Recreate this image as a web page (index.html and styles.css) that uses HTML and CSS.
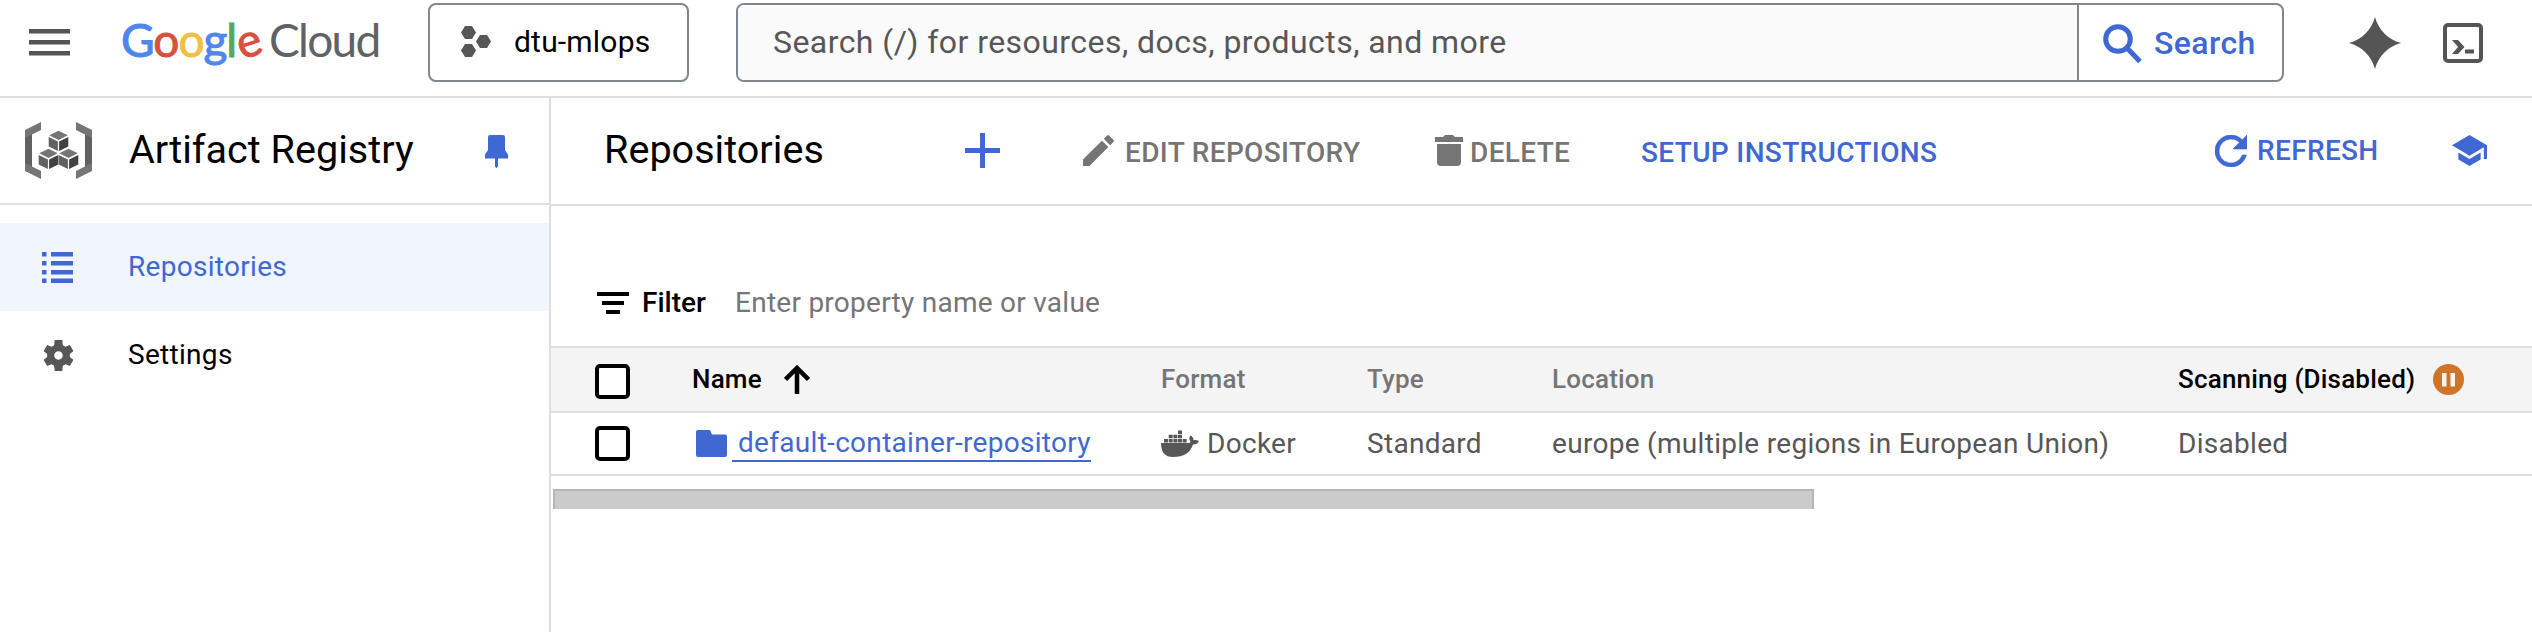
FILE: index.html
```html
<!DOCTYPE html>
<html lang="en">
<head>
<meta charset="utf-8">
<title>Artifact Registry</title>
<link rel="stylesheet" href="styles.css">
</head>
<body>
<header class="topbar">
  <svg class="menu" width="41" height="27" viewBox="0 0 41 27" fill="#555"><path d="M0 0h41v4.500H0zM0 11h41v4.500H0zM0 22h41v4.500H0z"/></svg>
  <div class="logo"><span class="google"><span class="b">G</span><span class="r">o</span><span class="y">o</span><span class="b">g</span><span class="g">l</span><span class="r tilt">e</span></span><span class="cloud">Cloud</span></div>
  <button class="project">
    <svg width="30" height="32" viewBox="0 0 30 32" fill="#575757"><path d="M4 0h7l4 6.500-4 6.500H4L0 6.500zM4 18h7l4 6.500-4 6.500H4L0 24.500zM19 9h7l4 6.500-4 6.500h-7l-4-6.500z"/></svg>
    <span class="project-name">dtu-mlops</span>
  </button>
  <div class="search">
    <div class="search-field"><span class="t-ph">Search (/) for resources, docs, products, and more</span></div>
    <div class="search-btn">
      <svg width="40" height="40" viewBox="0 0 40 40" fill="none" stroke="#3f68d3" stroke-width="5"><circle cx="15" cy="15" r="12.300"/><path d="M23.500 23.500 37 37.500"/></svg>
      <span class="t-search">Search</span>
    </div>
  </div>
  <svg class="spark" width="52" height="52" viewBox="0 0 52 52" fill="#555"><path d="M26 0C29.500 13 39 22.500 52 26 39 29.500 29.500 39 26 52 22.500 39 13 29.500 0 26 13 22.500 22.500 13 26 0z"/></svg>
  <svg class="term" width="40" height="40" viewBox="0 0 40 40"><rect x="2" y="2" width="36" height="36" rx="3" fill="none" stroke="#555" stroke-width="4"/><path d="M9 17h6l6.500 7-6.500 7H9l6-7zM22 26.500h9v4h-9z" fill="#555"/></svg>
</header>
<div class="body">
  <aside class="sidebar">
    <div class="side-head">
      <svg class="registry" width="67" height="58" viewBox="0 0 67 58"><path d="M0 12h7v34H0zM60 12h7v34h-7z" fill="#616161"/><path d="M16 0v8L0 16V8zM0 41l16 8v8L0 49zM51 0v8l16 8V8zM67 41l-16 8v8l16-8z" fill="#757575"/>
        <g id="cube"><path d="M33.500 8.700l9.300 4.500-9.300 4.700-9.300-4.700z" fill="#757575"/><path d="M23.700 15l9.200 4.600v9.400l-9.200-4.600z" fill="#616161"/><path d="M43.300 15l-9.200 4.600v9.400l9.200-4.600z" fill="#424242"/></g>
        <use href="#cube" x="-10" y="18"/><use href="#cube" x="10" y="18"/></svg>
      <h2 class="side-title">Artifact Registry</h2>
      <svg class="pin" width="23" height="33" viewBox="0 0 23 33" fill="#3f68d3"><path d="M5 0h13q2 0 2 2v13l3 4.500v4H0v-4L3 15V2q0-2 2-2zM10 23h3v8.500l-1.500 1.500-1.500-1.500z"/></svg>
    </div>
    <nav class="nav">
      <div class="item active">
        <svg width="31" height="31" viewBox="0 0 31 31" fill="#3f68d3"><path d="M0 0h4.500v4.500H0zM9 0h22v4.500H9zM0 9h4.500v4.500H0zM9 9h22v4.500H9zM0 18h4.500v4.500H0zM9 18h22v4.500H9zM0 26.500h4.500V31H0zM9 26.500h22V31H9z"/></svg>
        <span class="t-navrep">Repositories</span>
      </div>
      <div class="item">
        <svg width="31" height="31" viewBox="2.200 2 19.600 20" preserveAspectRatio="none" fill="#575757"><path d="M19.140 12.940c.04-.3.060-.61.060-.94 0-.32-.02-.64-.07-.94l2.030-1.580c.18-.14.230-.41.120-.61l-1.920-3.320c-.12-.22-.37-.29-.59-.22l-2.390.96c-.5-.38-1.030-.7-1.620-.94L14.400 2h-4.800l-.36 3.350c-.59.240-1.130.57-1.620.94l-2.390-.96c-.22-.08-.47 0-.59.220L2.740 8.870c-.12.210-.08.470.12.610l2.030 1.580c-.05.3-.09.630-.09.940s.02.640.07.940l-2.030 1.580c-.18.140-.23.410-.12.610l1.920 3.320c.12.220.37.290.59.220l2.390-.96c.5.380 1.030.7 1.620.94L9.600 22h4.800l.36-3.350c.59-.24 1.130-.56 1.620-.94l2.390.96c.22.080.47 0 .59-.22l1.920-3.320c.12-.22.070-.47-.12-.61zM12 14.700c-1.490 0-2.700-1.210-2.700-2.700s1.210-2.700 2.700-2.700 2.700 1.210 2.700 2.700-1.210 2.700-2.700 2.700z"/></svg>
        <span class="t-settings">Settings</span>
      </div>
    </nav>
  </aside>
  <main class="main">
    <div class="toolbar">
      <h1 class="page-title">Repositories</h1>
      <svg class="plus" width="35" height="35" viewBox="0 0 35 35" fill="#3f68d3"><path d="M15 0h5v15h15v5H20v15h-5V20H0v-5h15z"/></svg>
      <div class="action edit"><svg width="31" height="31" viewBox="3 2.900 18.100 18.100" fill="#757575"><path d="M3 17.250V21h3.750L17.810 9.940l-3.750-3.750zM20.710 7.040a1 1 0 0 0 0-1.410l-2.340-2.340a1 1 0 0 0-1.410 0l-1.830 1.830 3.750 3.750z"/></svg><span class="t-edit">EDIT REPOSITORY</span></div>
      <div class="action del"><svg width="28" height="31" viewBox="0 0 28 31" fill="#757575"><path d="M0 2h8l2-2h8l2 2h8v5H0zM2 9h24v18q0 4-4 4H6q-4 0-4-4z"/></svg><span class="t-delete">DELETE</span></div>
      <span class="setup t-setup">SETUP INSTRUCTIONS</span>
      <div class="refresh"><svg width="32" height="32" viewBox="4 4 16 16" fill="#3f68d3" stroke="#3f68d3" stroke-width=".3"><path d="M17.650 6.350A8 8 0 1 0 19.730 14h-2.080A6 6 0 1 1 12 6c1.660 0 3.140.69 4.220 1.780L13 11h7V4z"/></svg><span class="t-refresh">REFRESH</span></div>
      <svg class="learn" width="35" height="31" viewBox="1 3 22 18" preserveAspectRatio="none" fill="#3f68d3"><path d="M5 13.180v4L12 21l7-3.820v-4L12 17zM12 3 1 9l11 6 9-4.910V17h2V9z"/></svg>
    </div>
    <div class="filter">
      <svg width="32" height="22" viewBox="0 0 32 22" fill="#000"><path d="M0 0h32v4H0zM5 9h22v4H5zM9 18h14v4H9z"/></svg>
      <span class="t-filter">Filter</span>
      <span class="t-enter">Enter property name or value</span>
    </div>
    <div class="row head">
      <span class="box"></span>
      <div class="name"><span class="t-name">Name</span><svg class="arrow" width="26" height="29" viewBox="0 0 26 29" fill="none" stroke="#000" stroke-width="4.500"><path d="M13 29V3M1.500 14.500 13 3l11.500 11.500"/></svg></div>
      <span class="t-format">Format</span><span class="t-type">Type</span><span class="t-location">Location</span>
      <div class="scan"><span class="t-scan">Scanning (Disabled)</span><svg width="31" height="31" viewBox="0 0 31 31"><circle cx="15.500" cy="15.500" r="15.500" fill="#d07429"/><path d="M9 9h4.500v13.500H9zM17.500 9H22v13.500h-4.500z" fill="#f4f4f4"/></svg></div>
    </div>
    <div class="row data">
      <span class="box"></span>
      <div class="repo"><svg width="31" height="27" viewBox="0 0 31 27" fill="#3f68d3"><path d="M2 0h12l2 4.500h13q2 0 2 2V25q0 2-2 2H2q-2 0-2-2V2q0-2 2-2z"/></svg><a class="link"><span class="t-link">default-container-repository</span></a></div>
      <div class="fmt"><svg width="38" height="27" viewBox="0 0 38 27" fill="#575757"><path d="M0 13h27q2.500 0 2.500-1.500-2.500-3 0-6 3 1.500 3 4.500 3-.5 5.500 1-1.500 3.500-6 3.500Q28 27 12 27 0 27 0 13zM3 9h4v3.500H3zM7.700 9h4v3.500h-4zM12.400 9h4v3.500h-4zM17 9h4v3.500h-4zM21.700 9h4v3.500h-4zM7.700 4.700h4v3.500h-4zM12.400 4.700h4v3.500h-4zM17 4.700h4v3.500h-4zM17 .4h4V4h-4z"/></svg><span class="t-docker">Docker</span></div>
      <span class="t-standard">Standard</span><span class="t-europe">europe (multiple regions in European Union)</span><span class="t-disabled">Disabled</span>
    </div>
    <div class="scrollbar"></div>
  </main>
</div>
</body>
</html>
```
FILE: styles.css
```css
* { box-sizing: border-box; }
body { margin: 0; width: 2532px; height: 632px; overflow: hidden; background: #fff; font-family: Roboto, "Liberation Sans", sans-serif; color: #000; white-space: nowrap; display: flex; flex-direction: column; }
h1, h2 { margin: 0; font-weight: 400; }
svg { display: block; flex: none; }
span { flex: none; }

.topbar { height: 98px; flex: none; border-bottom: 2px solid #dfdfdf; display: flex; align-items: flex-start; }
.menu { margin: 29px 0 0 29px; }
.logo { width: 307px; margin: 12px 0 0 51px; display: flex; font-family: Lato, sans-serif; font-size: 46px; line-height: 56px; }
.google { width: 148px; letter-spacing: -1px; -webkit-text-stroke: 1px currentColor; }
.google span { -webkit-text-stroke: 1px currentColor; }
.tilt { display: inline-block; transform: rotate(-18deg); }
.b { color: #5086ec; } .r { color: #d85140; } .y { color: #f1bf42; } .g { color: #58a55c; }
.cloud { color: #5f6368; letter-spacing: -1.7px; }
.project { width: 261px; height: 79px; margin: 3px 0 0; padding: 0 0 2px 31px; border: 2px solid #80868b; border-radius: 8px; background: #fff; display: flex; align-items: center; gap: 23px; font: 30px Roboto, sans-serif; letter-spacing: .2px; color: #000; }
.search { width: 1548px; height: 79px; margin: 3px 0 0 47px; border: 2px solid #80868b; border-radius: 8px; display: flex; overflow: hidden; }
.search-field { width: 1341px; background: #fafafa; border-right: 2px solid #80868b; padding-left: 35px; font-size: 32px; letter-spacing: .44px; line-height: 74px; color: #575757; }
.search-btn { padding: 0 0 0 24px; display: flex; gap: 11px; font-size: 32px; font-weight: 500; letter-spacing: .4px; line-height: 77px; color: #3f68d3; }
.search-btn svg { margin-top: 19px; }
.spark { margin: 17px 0 0 65px; }
.term { margin: 23px 0 0 42px; }

.body { flex: 1; display: flex; }
.sidebar { width: 551px; flex: none; border-right: 2px solid #dfdfdf; }
.side-head { height: 107px; border-bottom: 2px solid #dfdfdf; display: flex; }
.registry { margin: 24px 0 0 25px; }
.side-title { width: 356px; margin-left: 37px; font-size: 39.6px; line-height: 103px; }
.pin { margin-top: 37px; }
.nav { padding-top: 18px; }
.item { height: 88px; padding-left: 43px; display: flex; align-items: center; gap: 54px; font-size: 28px; letter-spacing: .3px; line-height: 88px; }
.active { background: #f0f5fe; color: #3f68d3; }
.active svg { margin-left: -1px; margin-right: 1px; }

.main { flex: 1; min-width: 0; }
.toolbar { height: 108px; border-bottom: 2px solid #dfdfdf; display: flex; padding-left: 53px; font-size: 28px; font-weight: 500; letter-spacing: .35px; color: #757575; line-height: 109px; }
.page-title { width: 361px; font-size: 39.6px; letter-spacing: 0; color: #000; line-height: 103px; }
.plus { margin-top: 35px; }
.action { display: flex; }
.action svg { margin-top: 37px; }
.edit { width: 352px; margin-left: 83px; gap: 11px; }
.del { width: 206px; gap: 7px; }
.setup { width: 574px; color: #3f68d3; }
.refresh { width: 237px; display: flex; gap: 10px; color: #3f68d3; line-height: 105px; }
.refresh svg { margin-top: 37px; }
.learn { margin-top: 37px; }

.filter { height: 140px; padding: 54px 0 0 46px; display: flex; align-items: center; font-size: 28px; line-height: 80px; }
.t-filter { width: 93px; margin-left: 13px; font-weight: 500; }
.t-enter { color: #757575; letter-spacing: .26px; }

.row { display: grid; grid-template-columns: 97px 469px 206px 186px 626px 1fr; padding-left: 44px; align-items: center; border-bottom: 2px solid #dfdfdf; }
.head { height: 67px; border-top: 2px solid #dfdfdf; background: #f4f4f4; font-size: 26px; font-weight: 500; letter-spacing: .2px; color: #757575; line-height: 58px; padding-bottom: 1px; }
.data { height: 63px; font-size: 28px; letter-spacing: .3px; color: #575757; line-height: 58px; }
.box { width: 35px; height: 35px; border: 4px solid #000; border-radius: 5px; background: #fff; }
.head .box { margin-top: 5px; }
.row > :nth-child(n+5) { margin-left: -1px; }
.name { display: flex; align-items: center; gap: 22px; color: #000; }
.scan { display: flex; align-items: center; gap: 18px; color: #000; }
.scan svg { margin-top: 1px; }
.repo { display: flex; align-items: center; gap: 5px; padding-left: 4px; }
.link { display: block; height: 36px; line-height: 34px; padding-left: 6px; color: #3f68d3; border-bottom: 2px solid #3f68d3; }
.fmt { display: flex; align-items: center; gap: 8px; }
.scrollbar { width: 1261px; height: 20px; margin: 13px 0 0 2px; background: #cbcbcb; border: 2px solid #b6b6b6; border-bottom: 0; }
```
